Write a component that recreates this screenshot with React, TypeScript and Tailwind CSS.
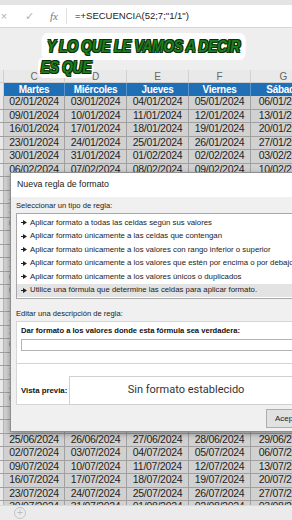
import React from 'react';

const COLS = ['C', 'D', 'E', 'F', 'G'];
const DAYS = ['Martes', 'Miércoles', 'Jueves', 'Viernes', 'Sábado'];
const WIDTHS = ['w-[61px]', 'w-[62px]', 'w-[62px]', 'w-[62px]', 'w-[66px]'];

const RULES = [
  'Aplicar formato a todas las celdas según sus valores',
  'Aplicar formato únicamente a las celdas que contengan',
  'Aplicar formato únicamente a los valores con rango inferior o superior',
  'Aplicar formato únicamente a los valores que estén por encima o por debajo del promedio',
  'Aplicar formato únicamente a los valores únicos o duplicados',
  'Utilice una fórmula que determine las celdas para aplicar formato.',
];

// =+SECUENCIA(52;7;"1/1") -> column C is Tuesday 02/01/2024
const fmt = (d: Date) => {
  const dd = String(d.getUTCDate()).padStart(2, '0');
  const mm = String(d.getUTCMonth() + 1).padStart(2, '0');
  return `${dd}/${mm}/${d.getUTCFullYear()}`;
};

const rows = Array.from({ length: 31 }, (_, week) =>
  COLS.map((_, k) => fmt(new Date(Date.UTC(2024, 0, 2 + week * 7 + k))))
);

const Arrow = () => (
  <svg width="6" height="5" viewBox="0 0 6 5" className="mr-[3px] shrink-0">
    <polygon points="0,2 2,2 2,0 6,2.5 2,5 2,3 0,3" fill="#222" />
  </svg>
);

const App: React.FC = () => {
  return (
    <div className="relative w-[292px] h-[520px] overflow-hidden bg-[#eeeeee] font-['Liberation_Sans',sans-serif]">
      {/* Formula bar */}
      <div className="h-[5px] bg-[#e4e4e4]" />
      <div className="flex items-center h-[23px] bg-white border-b border-[#d6d6d6]">
        <span className="w-[14px] -ml-[3px] text-center text-[11px] text-[#b0b0b0]">×</span>
        <span className="ml-[14px] text-[11px] text-[#b0b0b0]">✓</span>
        <span className="ml-[16px] font-['Liberation_Serif',serif] italic text-[11px] text-[#777]">fx</span>
        <div className="ml-[8px] w-px h-[16px] bg-[#e0e0e0]" />
        <span className="ml-[8px] text-[9.5px] text-[#222]">=+SECUENCIA(52;7;"1/1")</span>
      </div>
      <div className="h-[42px]" />

      {/* Column letters */}
      <div className="flex h-[13px] bg-[#e9e9e9] border-b border-[#cfcfcf]">
        <div className="w-[4px] shrink-0 border-r border-[#cfcfcf]" />
        {COLS.map((c, i) => (
          <div key={c} className={`${WIDTHS[i]} shrink-0 flex items-center justify-center border-r border-[#d2d2d2] text-[10px] text-[#666]`}>
            {c}
          </div>
        ))}
      </div>

      {/* Header row */}
      <div className="flex h-[13px] bg-[#1f6fb6]">
        <div className="w-[4px] shrink-0 bg-[#e9e9e9] border-r border-[#cfcfcf]" />
        {DAYS.map((d, i) => (
          <div key={d} className={`${WIDTHS[i]} shrink-0 flex items-center justify-center border-r border-[#5d93c8] text-[10px] font-bold tracking-[-0.3px] text-white`}>
            {d}
          </div>
        ))}
      </div>

      {/* Dates */}
      <div className="h-[409px] overflow-hidden">
        {rows.map((r, ri) => (
          <div key={ri} className="flex h-[13.5px] bg-[#d1d1d1] border-b border-[#a0a0a0]">
            <div className="w-[4px] shrink-0 bg-[#e9e9e9] border-r border-[#b5b5b5]" />
            {r.map((v, ci) => (
              <div key={ci} className={`${WIDTHS[ci]} shrink-0 flex items-center justify-center border-r border-[#a0a0a0] text-[10.5px] tracking-[-0.3px] text-[#1e1e1e]`}>
                {v}
              </div>
            ))}
          </div>
        ))}
      </div>

      {/* Sheet tabs bar */}
      <div className="h-[15px] flex items-center bg-[#ebebeb] border-t border-[#d8d8d8]">
        <div className="ml-[14px] w-[12px] h-[12px] rounded-full border border-[#c4c4c4] flex items-center justify-center text-[10px] leading-none text-[#bdbdbd]">
          +
        </div>
      </div>

      {/* Caption overlay */}
      <div className="absolute left-[38px] top-[33px] origin-left scale-x-[0.88] flex flex-col items-start font-['Liberation_Sans',sans-serif] font-bold italic text-[#1d7d1d] tracking-[-0.5px] [text-shadow:1px_1px_0_#0b2f0b,-1px_-1px_0_#0b2f0b,1px_-1px_0_#0b2f0b,-1px_1px_0_#0b2f0b]">
        <div className="ml-[4px] bg-white rounded-[7px] px-[6px] h-[27px] flex items-center text-[16px]">
          Y LO QUE LE VAMOS A DECIR
        </div>
        <div className="-mt-[3px] bg-white rounded-[7px] px-[3px] h-[21px] flex items-center text-[16px]">
          ES QUE
        </div>
      </div>

      {/* Dialog */}
      <div className="absolute left-[10px] top-[172px] w-[300px] h-[260px] border border-[#8e8e8e] bg-[#f0f0f0] shadow-[0_2px_6px_rgba(0,0,0,0.35)] font-['Liberation_Sans',sans-serif]">
        <div className="h-[24px] bg-white flex items-center pl-[6px] text-[8.8px] text-[#222]">
          Nueva regla de formato
        </div>
        <div className="px-[5px]">
          <div className="mt-[3px] h-[12px] flex items-center text-[7.6px] text-[#222]">
            Seleccionar un tipo de regla:
          </div>
          <div className="mt-[1px] h-[86px] bg-white border border-[#a8a8a8] pt-[2px]">
            {RULES.map((r, i) => (
              <div
                key={r}
                className={`h-[13.5px] flex items-center pl-[4px] text-[7.8px] text-[#222] whitespace-nowrap ${i === RULES.length - 1 ? 'bg-[#e3e3e3]' : ''}`}
              >
                <Arrow />
                {r}
              </div>
            ))}
          </div>
          <div className="mt-[9px] h-[12px] flex items-center text-[7.6px] text-[#222]">
            Editar una descripción de regla:
          </div>
          <div className="mt-[1px] h-[84px] bg-white border border-[#d6d6d6]">
            <div className="mt-[3px] ml-[4px] h-[12px] flex items-center text-[7.6px] font-bold text-[#111] whitespace-nowrap">
              Dar formato a los valores donde esta fórmula sea verdadera:
            </div>
            <div className="mt-[2px] ml-[4px] h-[12px] border border-[#b4b4b4] bg-white" />
            <div className="mt-[12px] h-px bg-[#d4d4d4]" />
            <div className="mt-[12px] flex items-center">
              <div className="ml-[4px] w-[49px] text-[7.8px] font-bold text-[#111] whitespace-nowrap">Vista previa:</div>
              <div className="h-[29px] w-[238px] border border-[#d0d0d0] flex items-center justify-center text-[11px] text-[#333] font-['Roboto',sans-serif]">
                Sin formato establecido
              </div>
            </div>
          </div>
          <div className="mt-[4px] ml-[250px] h-[19px] w-[70px] bg-[#e1e1e1] border border-[#adadad] flex items-center pl-[8px] text-[8px] text-[#222]">
            Aceptar
          </div>
        </div>
      </div>
    </div>
  );
};

export default App;
